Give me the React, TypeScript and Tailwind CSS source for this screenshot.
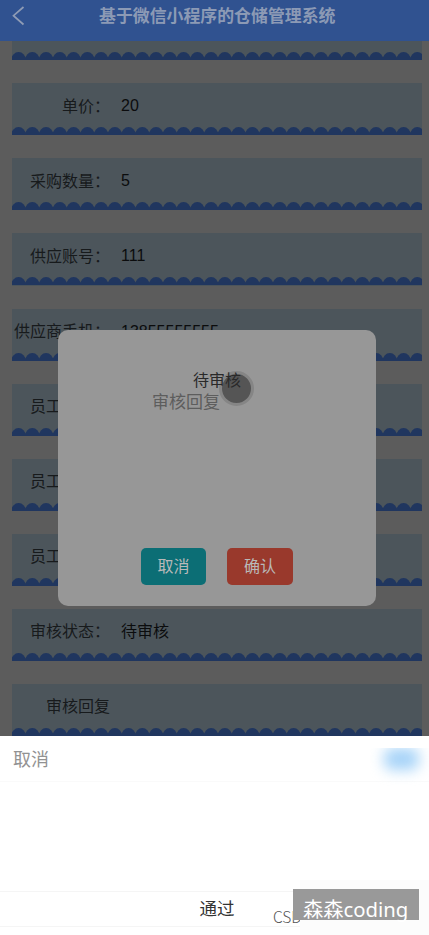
const CJK = "font-['Liberation_Sans','Noto_Sans_CJK_SC',sans-serif]";

type Row = { label: string; value: string; indent: string };

const rows: Row[] = [
  { label: '', value: '', indent: 'pl-[18px]' },
  { label: '单价：', value: '20', indent: 'pl-[50px]' },
  { label: '采购数量：', value: '5', indent: 'pl-[18px]' },
  { label: '供应账号：', value: '111', indent: 'pl-[18px]' },
  { label: '供应商手机：', value: '13855555555', indent: 'pl-[2px]' },
  { label: '员工账号：', value: '', indent: 'pl-[18px]' },
  { label: '员工姓名：', value: '', indent: 'pl-[18px]' },
  { label: '员工电话：', value: '', indent: 'pl-[18px]' },
  { label: '审核状态：', value: '待审核', indent: 'pl-[18px]' },
  { label: '审核回复', value: '', indent: 'pl-[34px]' },
];

const scallops = Array.from({ length: 30 }, (_, i) => 6.6 + i * 13.75);

function Scallop() {
  return (
    <svg className="block h-[8px] w-full shrink-0" viewBox="0 0 410 8" preserveAspectRatio="none">
      {scallops.map((x) => (
        <ellipse key={x} cx={x} cy="8" rx="7.3" ry="7.9" fill="#20365f" />
      ))}
      <rect y="5.5" width="410" height="2.5" fill="#20365f" />
    </svg>
  );
}

function Field({ label, value, indent }: Row) {
  return (
    <div className="mb-[23px] flex h-[52.05px] shrink-0 flex-col bg-[#4c555b] text-[16px] text-[#171a1c]">
      <div className="flex h-[44px] shrink-0 items-center">
        <span className={`w-[109px] shrink-0 whitespace-nowrap pt-[3px] ${indent}`}>{label}</span>
        <span className="pt-[2px] text-[#0b0c0d]">{value}</span>
      </div>
      <Scallop />
    </div>
  );
}

export default function App() {
  return (
    <div className={`relative flex h-[935px] w-[429px] flex-col overflow-hidden bg-[#5c5c5c] ${CJK}`}>
      <header className="z-10 flex h-[41px] shrink-0 items-start bg-[#305290]">
        <svg className="ml-[11px] mt-[6px] h-5 w-[15px]" viewBox="0 0 15 20" fill="none" stroke="#8f9cb5" strokeWidth="1.7">
          <path d="M12.5 1 2.5 9.7l10 8.8" />
        </svg>
        <h1 className="ml-[73px] mt-[5px] whitespace-nowrap text-[16.9px] font-bold leading-6 text-[#8c9ab5]">基于微信小程序的仓储管理系统</h1>
      </header>

      <main className="flex h-[695px] shrink-0 flex-col overflow-hidden pl-3 pr-[7px]">
        <div className="-mt-[32.7px] flex flex-col">
          {rows.map((row, i) => (
            <Field key={i} {...row} />
          ))}
        </div>
      </main>

      <section className="flex flex-1 flex-col bg-white">
        <div className="flex h-[46px] items-center border-b border-[#fafafa] pl-[13px] pt-[3px] text-[18px] text-[#929292]">
          取消
        </div>
        <div className="h-[109px]" />
        <div className="flex h-[36px] items-center justify-center border-y border-[#f5f5f5] pl-[5px] text-[17.5px] text-[#333]">通过</div>
      </section>

      <div className="absolute left-[58px] top-[330px] z-20 flex h-[276px] w-[318px] flex-col rounded-[10px] bg-[#979797]">
        <div className="absolute left-[161px] top-[41px] h-[35px] w-[35px] rounded-full border-[3px] border-[#858585] bg-[#555]" />
        <div className="relative mt-[40px] text-center text-[16px] leading-[22px] text-[#292929]">待审核</div>
        <div className="relative pl-[94px] text-[17px] leading-[22px] text-[#5d5d5d]">审核回复</div>
        <div className="mt-auto mb-[21px] flex gap-[21px] pl-[83px] text-[16px] text-[#b9b9b9]">
          <button className="h-[37px] w-[65px] rounded-[5px] bg-[#0c6e75]">取消</button>
          <button className="h-[37px] w-[66px] rounded-[5px] bg-[#99392c]">确认</button>
        </div>
      </div>

      {/* Softened confirm label of the picker, clipped at its top edge */}
      <div className="absolute left-[370px] top-[748px] h-[38px] w-[59px] overflow-hidden">
        <div className="ml-[14px] h-[22px] w-[35px] rounded-lg bg-[#a6d3f8] blur-[7px]" />
      </div>

      <div className="absolute left-[273px] top-[906px] h-[20px] w-[27px] overflow-hidden font-['Noto_Sans_CJK_SC',sans-serif] text-[15.5px] font-light leading-5 text-[#555]">CSDN</div>
      <div className="absolute left-[300px] top-[880px] h-[55px] w-[129px] bg-[#fcfcfc]" />
      <div className="absolute left-[293px] top-[889px] flex h-[31px] w-[126px] items-center whitespace-nowrap bg-[#999] pl-[10px] pt-[9px] font-['Noto_Sans','Noto_Sans_CJK_SC',sans-serif] text-[20.3px] leading-none text-white">
        森森coding
      </div>
    </div>
  );
}
